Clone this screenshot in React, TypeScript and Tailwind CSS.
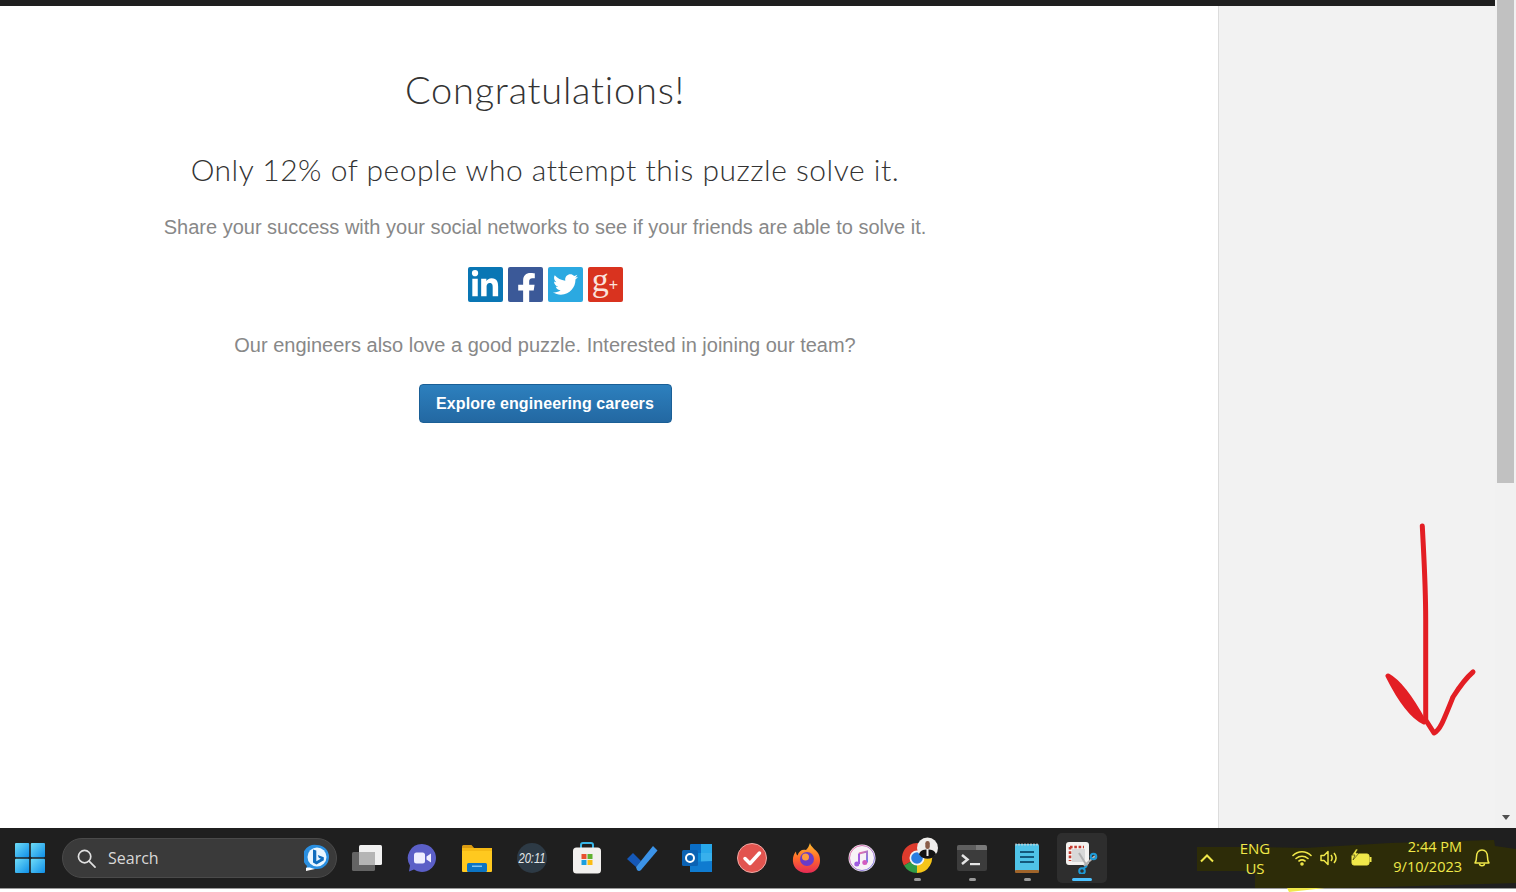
import React from "react";
import { FaLinkedinIn, FaFacebookF, FaTwitter } from "react-icons/fa";

function Social() {
  return (
    <div className="mt-[25px] flex justify-center gap-[5px]">
      <div className="flex h-[35px] w-[35px] items-center justify-center rounded-[2px] bg-[#0976b4] text-[30px] text-white">
        <FaLinkedinIn />
      </div>
      <div className="flex h-[35px] w-[35px] items-end justify-center overflow-hidden rounded-[2px] bg-[#3b5998] pl-[3px] text-[31px] text-white">
        <FaFacebookF className="translate-y-[2px]" />
      </div>
      <div className="flex h-[35px] w-[35px] items-center justify-center rounded-[2px] bg-[#2ba9e1] text-[25px] text-white">
        <FaTwitter />
      </div>
      <div className="flex h-[35px] w-[35px] items-center justify-center rounded-[2px] bg-[#d9331f] pb-[9px] font-['Liberation_Serif',serif] text-[34px] leading-[26px] text-[#fbe3dd]">
        g<span className="mt-[9px] font-['Liberation_Sans',sans-serif] text-[16px] leading-none">+</span>
      </div>
    </div>
  );
}

function WinLogo() {
  return (
    <svg width="30" height="30" viewBox="0 0 30 30">
      <defs>
        <linearGradient id="w" x1="0" y1="0" x2="1" y2="1">
          <stop offset="0" stopColor="#6fdcf7" />
          <stop offset="1" stopColor="#0f8fe8" />
        </linearGradient>
      </defs>
      <rect x="0" y="0" width="14.2" height="14.2" rx="1" fill="url(#w)" />
      <rect x="15.8" y="0" width="14.2" height="14.2" rx="1" fill="url(#w)" />
      <rect x="0" y="15.8" width="14.2" height="14.2" rx="1" fill="url(#w)" />
      <rect x="15.8" y="15.8" width="14.2" height="14.2" rx="1" fill="url(#w)" />
    </svg>
  );
}

const Bing = () => (
  <svg width="26" height="28" viewBox="0 0 26 28">
    <path d="M13 1a12 12 0 0 1 0 24H2l1-3A12 12 0 0 1 13 1z" fill="#2a8fe0" />
    <path d="M2 24c3-1 5 0 9 1l-9 2z" fill="#fff" />
    <circle cx="13" cy="13" r="9.5" fill="#e9f6ff" />
    <path d="M9 5.5l3.3 1.1v10.6l4.5-2.5-2-1-1-2.6 6 2.1v3.1l-7.3 4.3-3.5-2z" fill="#0f6cbd" />
  </svg>
);

const TaskView = () => (
  <svg width="32" height="28" viewBox="0 0 32 28">
    <rect x="8" y="1" width="23" height="20" rx="1.5" fill="#f0f0f0" />
    <rect x="1" y="8" width="23" height="19" rx="1.5" fill="#6a6a6a" fillOpacity="0.92" />
    <rect x="8" y="8" width="16" height="13" fill="#b5b5b5" />
  </svg>
);

const Teams = () => (
  <svg width="30" height="30" viewBox="0 0 30 30">
    <path d="M15 1a14 14 0 1 1-8 25.500L2 28.500l1-6A14 14 0 0 1 15 1z" fill="#5b5fc7" />
    <rect x="7" y="9.500" width="11" height="11" rx="2.500" fill="#eef" />
    <path d="M19.500 13.500l4.500-3v9l-4.500-3z" fill="#eef" />
  </svg>
);

const Explorer = () => (
  <svg width="32" height="28" viewBox="0 0 32 28">
    <path d="M1 2.500A1.500 1.500 0 0 1 2.500 1h8l3 3.500H1z" fill="#d99a12" />
    <rect x="1" y="4" width="30" height="24" rx="1" fill="#ffc91f" />
    <rect x="1" y="4" width="30" height="3" fill="#f5b914" />
    <rect x="6" y="19" width="20" height="9" rx="1.500" fill="#0b74c4" />
    <rect x="11" y="21.500" width="10" height="1.500" fill="#7cc4f2" />
  </svg>
);

const Clock = () => (
  <div className="flex h-[30px] w-[30px] items-center justify-center rounded-full bg-[#2d3a45] font-['Liberation_Sans',sans-serif] text-[14px] italic leading-none text-[#e4e8ea]">
    <span className="scale-x-[0.8]">20:11</span>
  </div>
);

const Store = () => (
  <svg width="30" height="32" viewBox="0 0 30 32">
    <path d="M9 7V3a2 2 0 0 1 2-2h8a2 2 0 0 1 2 2v4" fill="none" stroke="#38b6e8" strokeWidth="2" />
    <rect x="1" y="5.500" width="28" height="26" rx="3.500" fill="#f2f0ee" />
    <rect x="9.500" y="12" width="5" height="5" fill="#e8502f" />
    <rect x="15.500" y="12" width="5" height="5" fill="#5fb130" />
    <rect x="9.500" y="18" width="5" height="5" fill="#1c9fe0" />
    <rect x="15.500" y="18" width="5" height="5" fill="#fbbc12" />
  </svg>
);

const Todo = () => (
  <svg width="32" height="28" viewBox="0 0 32 28">
    <path d="M1 15l6-6 8 8-5 6z" fill="#1558b8" />
    <path d="M10 23L27 2l4.500 4.500L15 26a3 3 0 0 1-4 0z" fill="#3b93e8" />
  </svg>
);

const Outlook = () => (
  <svg width="30" height="30" viewBox="0 0 30 30">
    <rect x="8" y="1" width="22" height="28" rx="1" fill="#0a6ec7" />
    <rect x="19" y="1" width="11" height="9" fill="#28a8ea" />
    <rect x="8" y="10" width="11" height="9" fill="#0c8ad8" />
    <rect x="19" y="10" width="11" height="9" fill="#38b0ec" />
    <path d="M8 19l22-1v11H8z" fill="#0f7bd0" />
    <rect x="0" y="7" width="16" height="16" rx="1.500" fill="#0b62b3" />
    <circle cx="8" cy="15" r="4" fill="none" stroke="#fff" strokeWidth="2" />
  </svg>
);

const Tasks = () => (
  <svg width="30" height="30" viewBox="0 0 30 30">
    <circle cx="15" cy="15" r="14.500" fill="#e2544f" stroke="#f0a9a5" strokeWidth="1" />
    <path d="M8 15.500l5 5L22.500 10" fill="none" stroke="#fff" strokeWidth="3.500" strokeLinecap="round" strokeLinejoin="round" />
  </svg>
);

const Firefox = () => (
  <svg width="30" height="32" viewBox="0 0 30 32">
    <defs>
      <linearGradient id="ff" x1="0.5" y1="0" x2="0.5" y2="1">
        <stop offset="0" stopColor="#ffbd2e" />
        <stop offset="0.5" stopColor="#ff6a2b" />
        <stop offset="1" stopColor="#e62a55" />
      </linearGradient>
    </defs>
    <path d="M18 1c1 4 5 6 8 10 4 6 3 20-11 20C5 31 0 24 1 16c.5-3 1.500-5 3-6.500 0 2 .5 3 1.500 4C7 9 10 7 14 8c2-2 3-4 4-7z" fill="url(#ff)" />
    <circle cx="15" cy="17" r="7" fill="#6a3bc8" />
    <circle cx="13.500" cy="15" r="3.500" fill="#ff9a3c" />
  </svg>
);

const Music = () => (
  <svg width="28" height="28" viewBox="0 0 28 28">
    <defs>
      <linearGradient id="mu" x1="0" y1="0" x2="1" y2="1">
        <stop offset="0" stopColor="#f56ea0" />
        <stop offset="1" stopColor="#6f7ff0" />
      </linearGradient>
    </defs>
    <circle cx="14" cy="14" r="13.500" fill="#f7f2f6" />
    <circle cx="14" cy="14" r="12.500" fill="none" stroke="url(#mu)" strokeWidth="1" />
    <path d="M11 9.500l8-2v11" fill="none" stroke="url(#mu)" strokeWidth="2" />
    <path d="M11 9.500V20" fill="none" stroke="#a05be0" strokeWidth="2" />
    <circle cx="8.800" cy="20" r="2.500" fill="#a05be0" />
    <circle cx="16.800" cy="18.500" r="2.500" fill="#d35cc0" />
  </svg>
);

const Chrome = () => (
  <svg width="42" height="44" viewBox="0 0 42 44">
    <path d="M21 22L8 29.500A15 15 0 0 1 34 14.500z" fill="#dd3b2d" />
    <path d="M21 22L34 14.500A15 15 0 0 1 21 37z" fill="#f5c518" />
    <path d="M21 22V37A15 15 0 0 1 8 29.500z" fill="#2f9c47" />
    <circle cx="21" cy="22" r="7.500" fill="#f4f4f4" />
    <circle cx="21" cy="22" r="5.800" fill="#2a7de1" />
    <circle cx="31.500" cy="12" r="10.500" fill="#f0eeec" />
    <path d="M23 18.500c1-4 4-5 8.500-5s7.500 1 8.500 5a10.500 10.500 0 0 1-17 0z" fill="#131313" />
    <rect x="29.300" y="5" width="4.500" height="8" rx="2.200" fill="#8a5c48" />
    <rect x="30.500" y="13" width="2" height="7" fill="#ececec" />
  </svg>
);

const Term = () => (
  <svg width="30" height="28" viewBox="0 0 30 28">
    <rect x="0" y="1" width="30" height="26" rx="2" fill="#3c3c3c" />
    <path d="M0 3a2 2 0 0 1 2-2h17v5H0z" fill="#5e5e5e" />
    <path d="M19 1h9a2 2 0 0 1 2 2v3H19z" fill="#7a7a7a" />
    <path d="M5 11l5.500 4.500L5 20" fill="none" stroke="#e6e6e6" strokeWidth="2.500" />
    <rect x="13" y="19" width="10" height="2.200" fill="#e6e6e6" />
  </svg>
);

const Notepad = () => (
  <svg width="26" height="32" viewBox="0 0 26 32">
    <rect x="1" y="2" width="24" height="28" rx="1.500" fill="#4fc3e8" />
    <rect x="1" y="28" width="24" height="3" rx="1" fill="#a0642a" />
    <path d="M2 1.500v2M5 1.500v2M8 1.500v2M11 1.500v2M14 1.500v2M17 1.500v2M20 1.500v2M23 1.500v2" stroke="#ddd" strokeWidth="1.200" />
    <path d="M6 10h14M6 15h14M6 20h14" stroke="#14597c" strokeWidth="2" />
  </svg>
);

const Snip = () => (
  <svg width="32" height="32" viewBox="0 0 32 32">
    <rect x="0" y="0" width="23" height="23" rx="3" fill="#f4f2f0" />
    <path d="M4 5h14M4 5v14" stroke="#c43a2e" strokeWidth="2.600" strokeDasharray="2.600 1.700" fill="none" />
    <rect x="6" y="7" width="13" height="13" fill="#d8d8d8" />
    <path d="M13 11l8 13" stroke="#b0b0b0" strokeWidth="2" />
    <path d="M29 14L18 24" stroke="#b0b0b0" strokeWidth="2" />
    <circle cx="27.500" cy="14.500" r="2.800" fill="none" stroke="#1e9ad6" strokeWidth="2" />
    <circle cx="16" cy="29" r="2.800" fill="none" stroke="#1e9ad6" strokeWidth="2" />
    <path d="M21 24l-4 3" stroke="#1e9ad6" strokeWidth="2" />
  </svg>
);

function App() {
  const apps: { el: React.ReactNode; dot?: boolean; active?: boolean }[] = [
    { el: <TaskView /> },
    { el: <Teams /> },
    { el: <Explorer /> },
    { el: <Clock /> },
    { el: <Store /> },
    { el: <Todo /> },
    { el: <Outlook /> },
    { el: <Tasks /> },
    { el: <Firefox /> },
    { el: <Music /> },
    { el: <Chrome />, dot: true },
    { el: <Term />, dot: true },
    { el: <Notepad />, dot: true },
    { el: <Snip />, active: true },
  ];

  return (
    <div className="relative flex h-[892px] w-[1516px] flex-col overflow-hidden bg-white font-['Liberation_Sans',sans-serif]">
      <div className="flex h-[828px] w-full">
        <div className="flex w-[1495px] flex-col">
          <div className="h-[6px] bg-[#1f1f1f]" />
          <div className="flex flex-1">
            <main className="w-[1218px] bg-white">
              <div className="w-[1090px] text-center">
                <h1 className="mt-[58px] font-['Lato',sans-serif] text-[38px] font-light leading-[50px] tracking-[0.75px] text-[#333]">
                  Congratulations!
                </h1>
                <h2 className="mt-[35px] font-['Lato',sans-serif] text-[30px] font-light leading-[40px] tracking-[0.52px] text-[#333]">
                  Only 12% of people who attempt this puzzle solve it.
                </h2>
                <p className="mt-[23px] text-[20px] leading-[30px] text-[#888]">
                  Share your success with your social networks to see if your friends are able to solve it.
                </p>
                <Social />
                <p className="mt-[28px] text-[20px] leading-[30px] text-[#888]">
                  Our engineers also love a good puzzle. Interested in joining our team?
                </p>
                <button className="mt-[24px] h-[39px] w-[253px] rounded-[4px] border border-[#1a5f96] bg-gradient-to-b from-[#2d80be] to-[#2368a2] text-[16px] font-bold tracking-[0.1px] text-white">
                  Explore engineering careers
                </button>
              </div>
            </main>
            <aside className="flex-1 border-l border-[#dcdcdc] bg-[#f2f2f2]" />
          </div>
        </div>
        <div className="flex w-[21px] flex-col items-center bg-[#f1f1f1] px-[2px]">
          <div className="h-[483px] w-full bg-[#c1c1c1]" />
          <div className="flex-1" />
          <div className="mb-[8px] h-0 w-0 border-x-[4px] border-t-[5px] border-x-transparent border-t-[#505050]" />
        </div>
      </div>

      <div className="relative flex h-[60px] items-center bg-[#1f1f1f] pl-[15px]">
        <WinLogo />
        <div className="ml-[17px] flex h-[40px] w-[275px] items-center rounded-full border border-[#4a4a4a] bg-[#3a3a3a] pl-[14px] pr-[6px]">
          <svg width="19" height="19" viewBox="0 0 20 20" fill="none" stroke="#e0e0e0" strokeWidth="1.800">
            <circle cx="8" cy="8" r="6.500" />
            <path d="M13 13l6 6" strokeLinecap="round" />
          </svg>
          <span className="ml-[12px] flex-1 font-['Open_Sans',sans-serif] text-[16px] text-[#d8d8d8]">Search</span>
          <Bing />
        </div>
        <div className="ml-[2px] flex h-full">
          {apps.map((a, i) => (
            <div key={i} className="relative flex h-full w-[55px] items-center justify-center">
              {a.active && <div className="absolute left-[3px] top-[5px] h-[50px] w-[50px] rounded-[5px] bg-[#2e2e2e]" />}
              <div className="relative flex items-center justify-center">{a.el}</div>
              {a.dot && <div className="absolute bottom-[7px] left-[25px] h-[3px] w-[7px] rounded-full bg-[#9a9a9a]" />}
              {a.active && <div className="absolute bottom-[7px] left-[18px] h-[3px] w-[20px] rounded-full bg-[#4cc2ff]" />}
            </div>
          ))}
        </div>

        <div className="absolute inset-y-0 right-0 flex w-[323px] items-center pr-[14px] font-['Open_Sans',sans-serif] text-[#f0e84a]">
          <svg className="absolute left-0 top-0" width="323" height="64" viewBox="1193 828 323 64">
            <path d="M1197 847h58l50 1 85-5 104-3 1 6 21 3v34l-65 2-65 2-45 1h-86v-17h-58z" fill="#2d2c08" />
            <path d="M1287 888h38l-36 4z" fill="#f0e84a" />
          </svg>
          <div className="relative flex w-[28px] justify-center">
            <svg width="16" height="10" viewBox="0 0 16 10" fill="none" stroke="#f0e84a" strokeWidth="2">
              <path d="M2 8.500l6-6 6 6" />
            </svg>
          </div>
          <div className="relative -mt-[1px] w-[68px] text-center text-[15px] leading-[20px]">
            <div>ENG</div>
            <div>US</div>
          </div>
          <div className="relative flex w-[26px] justify-center">
            <svg width="20" height="16" viewBox="0 0 20 16" fill="none" stroke="#f0e84a" strokeWidth="1.600" strokeLinecap="round">
              <path d="M1 5.500c5-5 13-5 18 0" />
              <path d="M4 8.500c3.500-3 8.500-3 12 0" />
              <path d="M7 11c2-1.500 4-1.500 6 0" />
              <circle cx="10" cy="14" r="1" fill="#f0e84a" />
            </svg>
          </div>
          <div className="relative flex w-[30px] justify-center">
            <svg width="20" height="16" viewBox="0 0 20 16" fill="none" stroke="#f0e84a" strokeWidth="1.500">
              <path d="M1 5.500h3l4-4v13l-4-4H1z" strokeLinejoin="round" />
              <path d="M11 5c1.500 2 1.500 4 0 6" />
              <path d="M14 3c2.500 3 2.500 7 0 10" />
            </svg>
          </div>
          <div className="relative flex w-[32px] justify-center">
            <svg width="22" height="18" viewBox="0 0 22 18">
              <rect x="2" y="5" width="17" height="11" rx="2" fill="#f0e84a" stroke="#f0e84a" />
              <rect x="19.500" y="8" width="2" height="5" fill="#f0e84a" />
              <path d="M6 0L2 6h3l-2 5 6-7H6l2-4z" fill="#f0e84a" stroke="#2d2c08" strokeWidth="0.600" />
            </svg>
          </div>
          <div className="relative -mt-[2px] w-[85px] text-right text-[14.5px] leading-[20px]">
            <div>2:44 PM</div>
            <div className="whitespace-nowrap">9/10/2023</div>
          </div>
          <div className="relative flex w-[40px] justify-center">
            <svg width="18" height="20" viewBox="0 0 18 20" fill="none" stroke="#f0e84a" strokeWidth="1.500" strokeLinejoin="round">
              <path d="M2 15c1-1.500 1.500-3 1.500-6 0-4 2-7 5.500-7s5.500 3 5.500 7c0 3 .5 4.500 1.500 6z" />
              <path d="M6.500 15.500c0 3 5 3 5 0" />
            </svg>
          </div>
        </div>
      </div>
      <div className="h-px bg-[#9a9a9a]" />
      <div className="flex-1 bg-white" />

      <svg className="pointer-events-none absolute left-[1380px] top-[520px]" width="100" height="220" viewBox="1380 520 100 220" fill="none" stroke="#e31e24" strokeLinecap="round" strokeLinejoin="round">
        <path d="M1422.300 526C1424 560 1425.700 585 1425.700 620V720" strokeWidth="5" />
        <path d="M1388 676C1399 682 1412 700 1424 722C1411 716 1398 696 1388 676z" fill="#e31e24" strokeWidth="5" />
        <path d="M1427 722L1434 733C1440 730 1443 722 1453 697C1460 686 1466 678 1473 672" strokeWidth="5" />
      </svg>
    </div>
  );
}

export default App;
